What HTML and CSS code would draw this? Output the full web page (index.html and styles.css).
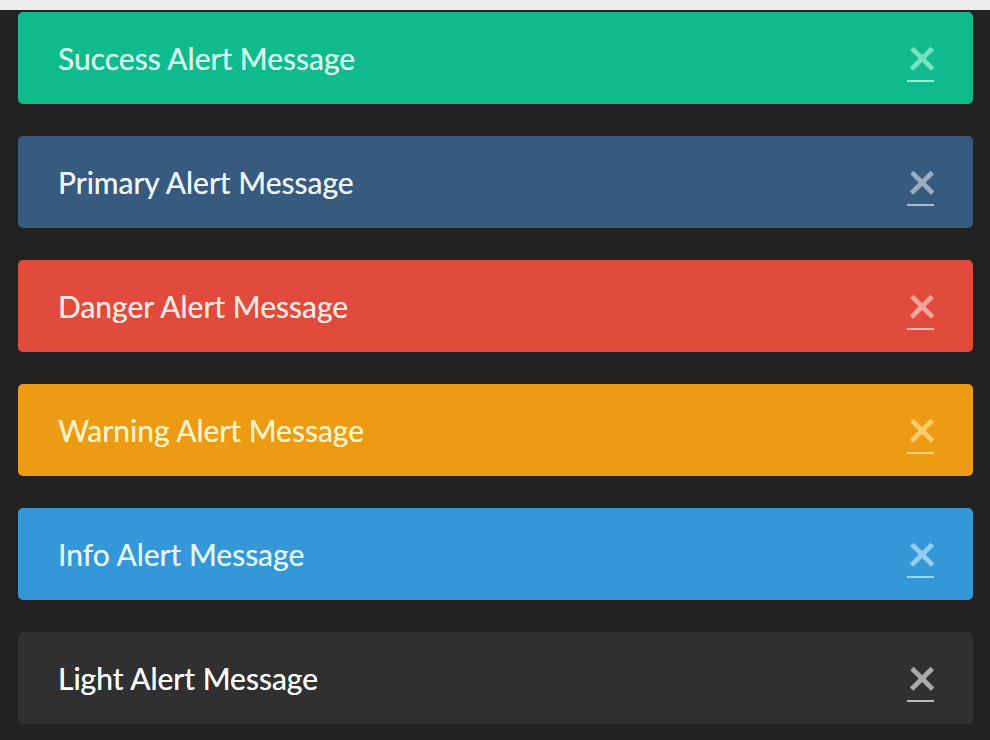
FILE: index.html
```html
<!DOCTYPE html>
<html lang="en">
<head>
  <meta charset="UTF-8">
  <meta name="viewport" content="width=device-width, initial-scale=1.0">
  <title>Alerts</title>
  <link rel="stylesheet" href="styles.css">
</head>
<body>

<div class="topbar"></div>

<!-- Dismissible alerts -->
<div class="alerts">
  <div class="alert alert-success">
    <span class="alert-text">Success Alert Message</span>
    <a class="close" href="#">&times;</a>
  </div>
  <div class="alert alert-primary">
    <span class="alert-text">Primary Alert Message</span>
    <a class="close" href="#">&times;</a>
  </div>
  <div class="alert alert-danger">
    <span class="alert-text">Danger Alert Message</span>
    <a class="close" href="#">&times;</a>
  </div>
  <div class="alert alert-warning">
    <span class="alert-text">Warning Alert Message</span>
    <a class="close" href="#">&times;</a>
  </div>
  <div class="alert alert-info">
    <span class="alert-text">Info Alert Message</span>
    <a class="close" href="#">&times;</a>
  </div>
  <div class="alert alert-light">
    <span class="alert-text">Light Alert Message</span>
    <a class="close" href="#">&times;</a>
  </div>
</div>

</body>
</html>
```

FILE: styles.css
```css
/* Dark page with stacked alerts */
body {
  margin: 0;
  background-color: #222;
  font-family: Lato, "Open Sans", sans-serif;
}

.topbar {
  height: 10px;
  background-color: #ececec;
}

.alerts {
  display: flex;
  flex-direction: column;
  gap: 32px;
  padding: 2px 17px 0 18px;
}

.alert {
  display: flex;
  align-items: center;
  justify-content: space-between;
  height: 92px;
  padding: 0 39px 0 40px;
  border-radius: 5px;
  box-sizing: border-box;
  font-size: 30px;
  color: #fff;
}

.alert-text {
  margin-bottom: 1px;
  text-shadow: 0 0 0.6px currentColor;
}

.close {
  display: block;
  width: 27px;
  margin-top: 7px;
  font-size: 52px;
  font-weight: 700;
  line-height: 30px;
  text-align: center;
  text-decoration: none;
  color: rgba(255, 255, 255, 0.5);
  border-bottom: 2px solid rgba(255, 255, 255, 0.6);
  padding-bottom: 9px;
}

.alert-success { background-color: #0fbb8c; color: #d8fbef; }
.alert-primary { background-color: #375a7f; color: #eef6fb; }
.alert-danger  { background-color: #e14b3b; color: #fbe6e2; }
.alert-warning { background-color: #ec9b12; color: #fdf3c8; }
.alert-info    { background-color: #3497d8; color: #e2f6fb; }
.alert-light   { background-color: #303030; color: #fff; }

.alert-success .close { color: rgba(190, 250, 225, 0.6); border-color: rgba(190, 250, 225, 0.8); }
.alert-warning .close { color: rgba(255, 225, 150, 0.7); border-color: rgba(255, 225, 150, 0.8); }
.alert-info .close    { color: rgba(210, 240, 255, 0.6); border-color: rgba(210, 240, 255, 0.7); }
.alert-light .close   { color: #aaa; border-color: #bbb; }
```
